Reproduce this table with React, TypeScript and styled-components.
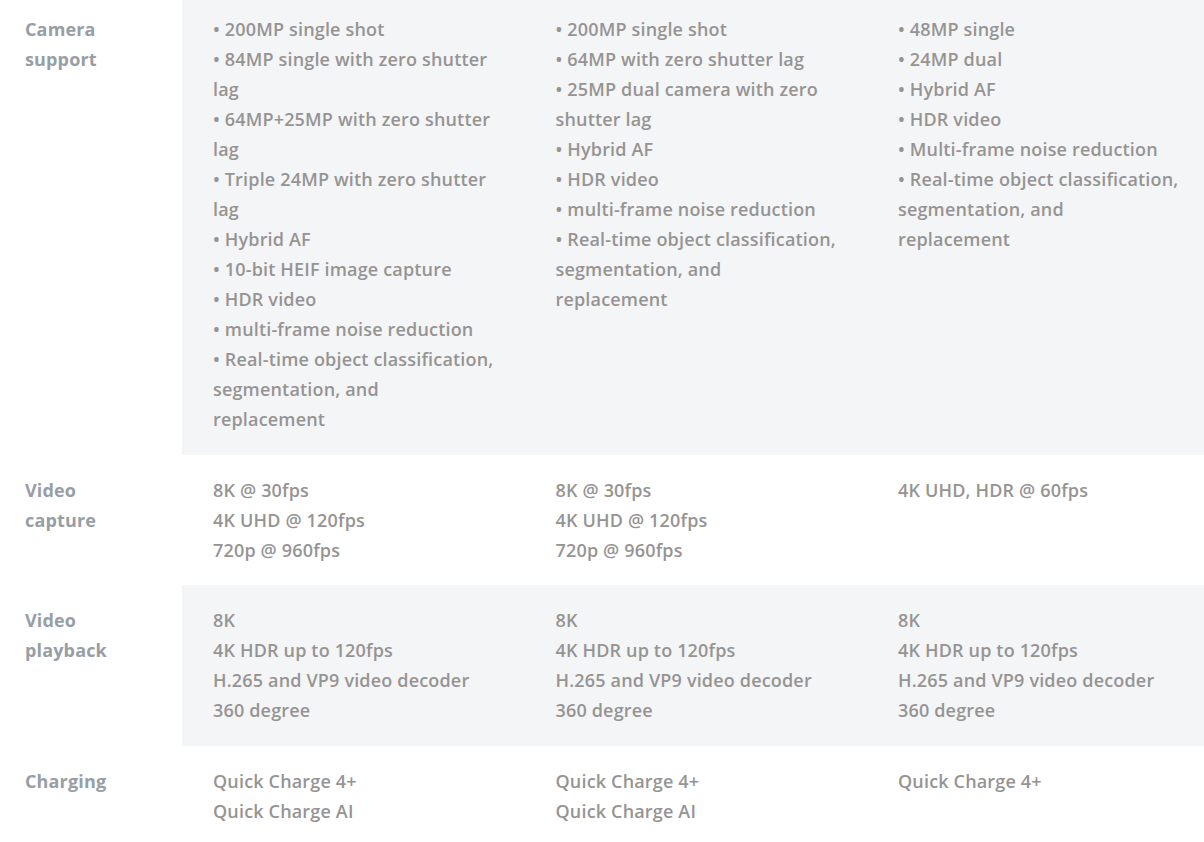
import React from 'react';
import styled, { createGlobalStyle } from 'styled-components';

const GlobalStyle = createGlobalStyle`
  html, body {
    margin: 0;
    padding: 0;
    background: #ffffff;
    overflow: hidden;
  }
  body {
    font-family: 'Open Sans', 'Liberation Sans', sans-serif;
    -webkit-font-smoothing: antialiased;
  }
`;

const Table = styled.div`
  width: 1210px;
  display: flex;
  flex-direction: column;
`;

const Row = styled.div<{ $shaded: boolean; $first?: boolean }>`
  display: grid;
  grid-template-columns: 182px repeat(3, 342.5px);
  & > div {
    padding-top: ${({ $first }) => ($first ? '14px' : '20px')};
    padding-bottom: 20.5px;
    background: ${({ $shaded }) => ($shaded ? '#f4f5f7' : '#ffffff')};
  }
  & > div:first-child {
    background: #ffffff;
  }
`;

const Label = styled.div`
  padding-left: 25px;
  padding-right: 20px;
  font-size: 18px;
  line-height: 30px;
  font-weight: 700;
  letter-spacing: 0.15px;
  color: #979ea5;
`;

const Cell = styled.div`
  padding-left: 31px;
  padding-right: 30px;
  font-size: 18px;
  line-height: 30px;
  font-weight: 600;
  letter-spacing: 0.17px;
  color: #969493;
`;

const Line = styled.div`
  margin: 0;
  white-space: pre-line;
`;

interface SpecRow {
  label: string[];
  cells: string[][];
}

const realTime = '• Real-time object classification,\nsegmentation, and\nreplacement';

const rows: SpecRow[] = [
  {
    label: ['Camera', 'support'],
    cells: [
      [
        '• 200MP single shot',
        '• 84MP single with zero shutter lag',
        '• 64MP+25MP with zero shutter lag',
        '• Triple 24MP with zero shutter lag',
        '• Hybrid AF',
        '• 10-bit HEIF image capture',
        '• HDR video',
        '• multi-frame noise reduction',
        realTime,
      ],
      [
        '• 200MP single shot',
        '• 64MP with zero shutter lag',
        '• 25MP dual camera with zero shutter lag',
        '• Hybrid AF',
        '• HDR video',
        '• multi-frame noise reduction',
        realTime,
      ],
      [
        '• 48MP single',
        '• 24MP dual',
        '• Hybrid AF',
        '• HDR video',
        '• Multi-frame noise reduction',
        realTime,
      ],
    ],
  },
  {
    label: ['Video', 'capture'],
    cells: [
      ['8K @ 30fps', '4K UHD @ 120fps', '720p @ 960fps'],
      ['8K @ 30fps', '4K UHD @ 120fps', '720p @ 960fps'],
      ['4K UHD, HDR @ 60fps'],
    ],
  },
  {
    label: ['Video', 'playback'],
    cells: [
      ['8K', '4K HDR up to 120fps', 'H.265 and VP9 video decoder', '360 degree'],
      ['8K', '4K HDR up to 120fps', 'H.265 and VP9 video decoder', '360 degree'],
      ['8K', '4K HDR up to 120fps', 'H.265 and VP9 video decoder', '360 degree'],
    ],
  },
  {
    label: ['Charging'],
    cells: [
      ['Quick Charge 4+', 'Quick Charge AI'],
      ['Quick Charge 4+', 'Quick Charge AI'],
      ['Quick Charge 4+'],
    ],
  },
];

const App: React.FC = () => (
  <>
    <GlobalStyle />
    <Table>
      {rows.map((row, i) => (
        <Row key={row.label.join(' ')} $shaded={i % 2 === 0} $first={i === 0}>
          <Label>
            {row.label.map((l) => (
              <Line key={l}>{l}</Line>
            ))}
          </Label>
          {row.cells.map((cell, j) => (
            <Cell key={j}>
              {cell.map((text, k) => (
                <Line key={k}>{text}</Line>
              ))}
            </Cell>
          ))}
        </Row>
      ))}
    </Table>
  </>
);

export default App;
